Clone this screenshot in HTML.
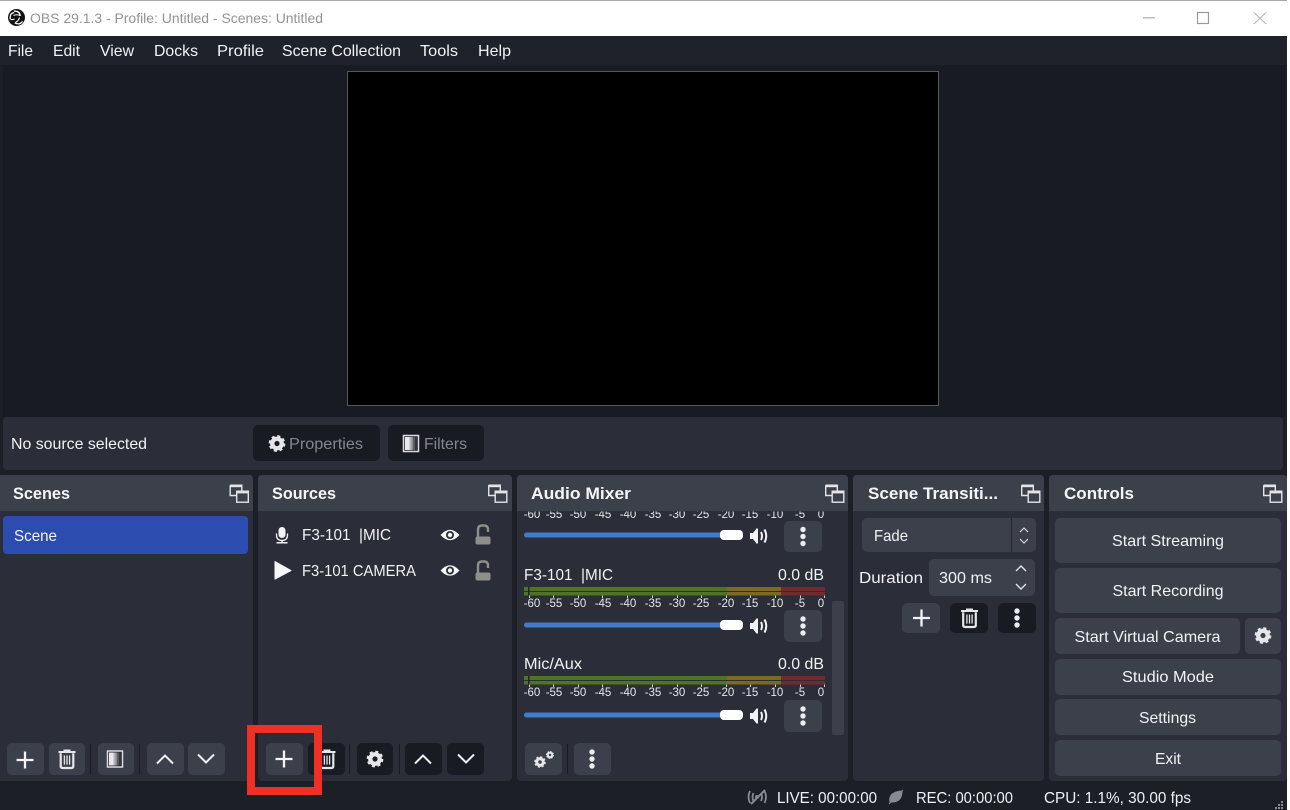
<!DOCTYPE html>
<html><head><meta charset="utf-8">
<style>
html,body{margin:0;padding:0;background:#1d1f26;width:1290px;height:810px;overflow:hidden}
svg{display:block}
text{font-family:"Liberation Sans",sans-serif;font-size:16px;fill:#f2f2f4;white-space:pre}
.b{font-weight:bold;font-size:16.5px;fill:#f5f5f7}
.s{font-size:11.5px;fill:#e6e6ea}
.m{text-anchor:middle}
</style></head><body>
<svg width="1290" height="810" viewBox="0 0 1290 810" xmlns="http://www.w3.org/2000/svg">
<defs>
<g id="float" fill="none" stroke="#e4e4e8" stroke-width="1.4">
<path d="M.7.7H12.3V6M.7.7V11H7"/><path d="M.7 1.6H12.3" stroke-width="2.2"/>
<rect x="7.2" y="6.7" width="11.6" height="11"/><path d="M7.2 7.8H18.8" stroke-width="2.2"/>
</g>
<g id="plus"><path d="M-8.5 0H8.5M0-8.5V8.5" stroke="#f4f4f6" stroke-width="2.3" fill="none"/></g>
<g id="trash" fill="none" stroke="#e6e6ea"><path d="M-8.5-7H8.5M-3.5-8.5H3.5" stroke-width="2"/><path d="M-6.3-5.8V7Q-6.3 9-4.3 9H4.3Q6.3 9 6.3 7V-5.8" stroke-width="2.2"/><path d="M-2.6-3.5V5.6M0-3.5V5.6M2.6-3.5V5.6" stroke-width="1.3"/></g>
<g id="dots" fill="#ecedf0"><circle cy="-7" r="2.7"/><circle r="2.7"/><circle cy="7" r="2.7"/></g>
<g id="gear"><circle r="5" fill="none" stroke="#e6e6ea" stroke-width="4.6"/><circle r="7.6" fill="none" stroke="#e6e6ea" stroke-width="2.4" stroke-dasharray="3.2 2.77"/></g>
<g id="up"><path d="M-8 4.5L0-3.5L8 4.5" fill="none" stroke="#eeeef1" stroke-width="2"/></g>
<g id="down"><path d="M-8-4.5L0 3.5L8-4.5" fill="none" stroke="#eeeef1" stroke-width="2"/></g>
<g id="filter"><rect x="-7.5" y="-8" width="15" height="16" fill="#20222a" stroke="#dcdce0" stroke-width="1.5"/><rect x="-6" y="-6.5" width="4.5" height="13" fill="#e8e8ec"/><rect x="-1.5" y="-6.5" width="2" height="13" fill="#b4b4b8"/><rect x=".5" y="-6.5" width="1.8" height="13" fill="#8a8a8e"/><rect x="2.3" y="-6.5" width="1.8" height="13" fill="#5c5c60"/><rect x="4.1" y="-6.5" width="1.9" height="13" fill="#35353a"/></g>
<g id="spk"><path d="M-9-3H-6L-2.500-7.500H-1V7.500H-2.500L-6 3H-9Z" fill="#f2f2f4"/><path d="M2-4Q4 0 2 4M5.500-6.500Q9 0 5.500 6.500" fill="none" stroke="#f2f2f4" stroke-width="2"/></g>
<g id="eye"><path d="M-9.500 0Q0-10.500 9.500 0Q0 10.500-9.500 0Z" fill="#f6f6f8"/><circle r="4" fill="#2b2e38"/><circle r="2.200" fill="#f6f6f8"/></g>
<g id="lock"><rect x="-7.500" y="1.500" width="15" height="8" rx="2" fill="#8e8e8a"/><path d="M-5 2V-5.500Q-5-9.500-1-9.500H1Q5-9.500 5-5.500V-3" fill="none" stroke="#8e8e8a" stroke-width="2.400"/></g>
<g id="ticks">
<text class="s" x="8" y="4" text-anchor="middle">-60</text><text class="s" x="30" y="4" text-anchor="middle">-55</text><text class="s" x="54" y="4" text-anchor="middle">-50</text><text class="s" x="79" y="4" text-anchor="middle">-45</text><text class="s" x="104" y="4" text-anchor="middle">-40</text><text class="s" x="129" y="4" text-anchor="middle">-35</text><text class="s" x="153" y="4" text-anchor="middle">-30</text><text class="s" x="177" y="4" text-anchor="middle">-25</text><text class="s" x="202" y="4" text-anchor="middle">-20</text><text class="s" x="226" y="4" text-anchor="middle">-15</text><text class="s" x="251" y="4" text-anchor="middle">-10</text><text class="s" x="276" y="4" text-anchor="middle">-5</text><text class="s" x="297" y="4" text-anchor="middle">0</text>
</g>
<g id="meter">
<rect x="0" y="0" width="203" height="4" fill="#4f7423"/><rect x="0" y="5" width="203" height="3.500" fill="#4f7423"/>
<rect x="203" y="0" width="54" height="4" fill="#7a6a22"/><rect x="203" y="5" width="54" height="3.500" fill="#7a6a22"/>
<rect x="257" y="0" width="44" height="4" fill="#702a30"/><rect x="257" y="5" width="44" height="3.500" fill="#702a30"/>
<rect x="4" y="0" width="1.500" height="8.500" fill="#22242c"/>
<path d="M5.500 8.500V11M29.500 8.500V11M54.500 8.500V11M78.500 8.500V11M103.500 8.500V11M128.500 8.500V11M153.500 8.500V11M177.500 8.500V11M202.500 8.500V11M226.500 8.500V11M251.500 8.500V11M276.500 8.500V11M300.500 8.500V11" stroke="#d0d0d4"/>
</g>
<g id="slider"><rect x="0" y="-2.500" width="200" height="5" rx="2.500" fill="#3f7cc9"/><rect x="196" y="-5" width="23" height="10" rx="4" fill="#fff"/></g>
</defs>

<!-- title bar -->
<rect width="1290" height="36" fill="#fff"/>
<rect width="1290" height="1" fill="#a9a9a9"/>
<circle cx="16.500" cy="17.500" r="8.500" fill="#111"/>
<path d="M13 11.500Q19 10.500 20 15.500M23 20.500Q20.500 25 15.500 23M10.500 20Q9 14 13.500 13" fill="none" stroke="#fff" stroke-width="1.300" transform="rotate(8 16.500 17.500)"/>
<path d="M13.500 15.500Q16.500 14 20 15.500M15.500 22.500Q18.500 21 19.500 17.500M10.500 19.500Q12 20 14.500 19" fill="none" stroke="#fff" stroke-width="1.100"/>
<text x="30" y="23" style="font-size:13.500px;fill:#939393" textLength="293" lengthAdjust="spacingAndGlyphs">OBS 29.1.3 - Profile: Untitled - Scenes: Untitled</text>
<rect x="1143" y="17" width="12" height="1.500" fill="#bdbdbd"/>
<rect x="1197.500" y="12.500" width="11" height="11" fill="none" stroke="#9a9a9a" stroke-width="1.200"/>
<path d="M1254 12.500L1266 24M1266 12.500L1254 24" stroke="#b5b5b5" stroke-width="1.100"/>

<!-- menu -->
<rect y="36" width="1290" height="29" fill="#1f222a"/>
<text x="8" y="56" textLength="25" lengthAdjust="spacingAndGlyphs">File</text>
<text x="53" y="56" textLength="27" lengthAdjust="spacingAndGlyphs">Edit</text>
<text x="100" y="56" textLength="34" lengthAdjust="spacingAndGlyphs">View</text>
<text x="154" y="56" textLength="44" lengthAdjust="spacingAndGlyphs">Docks</text>
<text x="217" y="56" textLength="47" lengthAdjust="spacingAndGlyphs">Profile</text>
<text x="282" y="56" textLength="119" lengthAdjust="spacingAndGlyphs">Scene Collection</text>
<text x="420" y="56" textLength="38" lengthAdjust="spacingAndGlyphs">Tools</text>
<text x="478" y="56" textLength="33" lengthAdjust="spacingAndGlyphs">Help</text>

<!-- preview -->
<rect x="3" y="65" width="1282" height="352" fill="#191b22"/>
<rect x="347.500" y="71.500" width="591" height="334" fill="#000" stroke="#55575f"/>

<!-- context bar -->
<rect x="3" y="417" width="1280" height="53" rx="4" fill="#2b2e38"/>
<text x="11" y="449" textLength="136" lengthAdjust="spacingAndGlyphs">No source selected</text>
<rect x="253" y="425" width="127" height="36" rx="5" fill="#191b22"/>
<use href="#gear" transform="translate(277,443.500) scale(.95)"/>
<text x="289" y="449" style="fill:#85868c" textLength="74" lengthAdjust="spacingAndGlyphs">Properties</text>
<rect x="388" y="425" width="96" height="36" rx="5" fill="#191b22"/>
<use href="#filter" transform="translate(411,443.500)"/>
<text x="424" y="449" style="fill:#85868c" textLength="43" lengthAdjust="spacingAndGlyphs">Filters</text>

<!-- docks -->
<rect x="-5" y="475" width="258" height="306" rx="4" fill="#2b2e38"/>
<path d="M0 475H249Q253 475 253 479V511H0Z" fill="#3c404b"/>
<rect x="258" y="475" width="254" height="306" rx="4" fill="#2b2e38"/>
<path d="M262 475H508Q512 475 512 479V511H258V479Q258 475 262 475Z" fill="#3c404b"/>
<rect x="517" y="475" width="331" height="306" rx="4" fill="#2b2e38"/>
<path d="M521 475H844Q848 475 848 479V511H517V479Q517 475 521 475Z" fill="#3c404b"/>
<rect x="853" y="475" width="191" height="306" rx="4" fill="#2b2e38"/>
<path d="M857 475H1040Q1044 475 1044 479V511H853V479Q853 475 857 475Z" fill="#3c404b"/>
<rect x="1049" y="475" width="238" height="306" rx="4" fill="#2b2e38"/>
<path d="M1053 475H1283Q1287 475 1287 479V511H1049V479Q1049 475 1053 475Z" fill="#3c404b"/>

<text class="b" x="13" y="499" textLength="57" lengthAdjust="spacingAndGlyphs">Scenes</text>
<text class="b" x="272" y="499" textLength="64" lengthAdjust="spacingAndGlyphs">Sources</text>
<text class="b" x="531" y="499" textLength="100" lengthAdjust="spacingAndGlyphs">Audio Mixer</text>
<text class="b" x="868" y="499" textLength="130" lengthAdjust="spacingAndGlyphs">Scene Transiti...</text>
<text class="b" x="1064" y="499" textLength="70" lengthAdjust="spacingAndGlyphs">Controls</text>
<use href="#float" x="229.500" y="484.500"/>
<use href="#float" x="488" y="484.500"/>
<use href="#float" x="825" y="484.500"/>
<use href="#float" x="1021" y="484.500"/>
<use href="#float" x="1263" y="484.500"/>

<!-- scenes -->
<rect x="3" y="516" width="245" height="38" rx="4" fill="#2d4cb0"/>
<text x="14" y="541" textLength="43" lengthAdjust="spacingAndGlyphs">Scene</text>

<!-- sources -->
<g fill="#f4f4f6"><rect x="278.500" y="527" width="7" height="11" rx="3.500"/><path d="M276.500 533.500V535Q276.500 540.500 282 540.500Q287.500 540.500 287.500 535V533.500" fill="none" stroke="#f4f4f6" stroke-width="1.300"/><rect x="281.300" y="540" width="1.500" height="2.500"/><rect x="276.500" y="542" width="11" height="1.500"/></g>
<path d="M275 561.500L291 570.500L275 579Z" fill="#f6f6f8" stroke="#f6f6f8" stroke-linejoin="round"/>
<text x="302" y="540" textLength="89" lengthAdjust="spacingAndGlyphs">F3-101  |MIC</text>
<text x="302" y="576" textLength="114" lengthAdjust="spacingAndGlyphs">F3-101 CAMERA</text>
<use href="#eye" x="450" y="535"/><use href="#eye" x="450" y="570.500"/>
<use href="#lock" x="483" y="535"/><use href="#lock" x="483" y="571"/>

<!-- audio mixer -->
<svg x="517" y="511.500" width="331" height="230" viewBox="517 511.500 331 230">
<use href="#ticks" x="524" y="514"/>
</svg>
<use href="#slider" x="524" y="535"/><use href="#spk" x="759" y="536"/>
<rect x="784" y="521" width="38" height="31" rx="5" fill="#3c404b"/><use href="#dots" x="803" y="536.500"/>

<text x="524" y="580" textLength="89" lengthAdjust="spacingAndGlyphs">F3-101  |MIC</text>
<text x="778" y="580" textLength="46" lengthAdjust="spacingAndGlyphs">0.0 dB</text>
<use href="#meter" x="524" y="587"/>
<use href="#ticks" x="524" y="603"/>
<use href="#slider" x="524" y="625"/><use href="#spk" x="759" y="626"/>
<rect x="784" y="610" width="38" height="32" rx="5" fill="#3c404b"/><use href="#dots" x="803" y="626"/>

<text x="524" y="669" textLength="58" lengthAdjust="spacingAndGlyphs">Mic/Aux</text>
<text x="778" y="669" textLength="46" lengthAdjust="spacingAndGlyphs">0.0 dB</text>
<use href="#meter" x="524" y="676"/>
<use href="#ticks" x="524" y="692"/>
<use href="#slider" x="524" y="715"/><use href="#spk" x="759" y="716"/>
<rect x="784" y="700" width="38" height="32" rx="5" fill="#3c404b"/><use href="#dots" x="803" y="716"/>
<rect x="832" y="601" width="12" height="134" rx="2" fill="#3c404b"/>

<!-- transitions -->
<rect x="862" y="518" width="174" height="34" rx="5" fill="#3c404b"/>
<rect x="1011" y="518" width="1" height="34" fill="#23252d"/>
<text x="874" y="541" textLength="34" lengthAdjust="spacingAndGlyphs">Fade</text>
<path d="M1020 532L1024 528L1028 532M1020 539L1024 543L1028 539" fill="none" stroke="#d8d8dc" stroke-width="1.200"/>
<text x="859" y="583" textLength="64" lengthAdjust="spacingAndGlyphs">Duration</text>
<rect x="929" y="559" width="106" height="37" rx="5" fill="#3c404b"/>
<text x="939" y="583" textLength="53" lengthAdjust="spacingAndGlyphs">300 ms</text>
<path d="M1016 571L1021 566L1026 571M1016 584L1021 589L1026 584" fill="none" stroke="#e4e4e8" stroke-width="1.400"/>
<rect x="902" y="603" width="38" height="30" rx="5" fill="#3c404b"/><use href="#plus" x="921.500" y="618"/>
<rect x="950" y="603" width="38" height="30" rx="5" fill="#191b22"/><use href="#trash" x="969.500" y="618"/>
<rect x="998" y="603" width="38" height="30" rx="5" fill="#191b22"/><use href="#dots" x="1017" y="618"/>

<!-- controls -->
<rect x="1055" y="518" width="226" height="45" rx="5" fill="#3c404b"/>
<rect x="1055" y="568" width="226" height="45" rx="5" fill="#3c404b"/>
<rect x="1055" y="618" width="185" height="36" rx="5" fill="#3c404b"/>
<rect x="1245" y="618" width="36" height="36" rx="5" fill="#3c404b"/>
<rect x="1055" y="659" width="226" height="36" rx="5" fill="#3c404b"/>
<rect x="1055" y="699" width="226" height="36" rx="5" fill="#3c404b"/>
<rect x="1055" y="740" width="226" height="36" rx="5" fill="#3c404b"/>
<text x="1112" y="546" textLength="112" lengthAdjust="spacingAndGlyphs">Start Streaming</text>
<text x="1112.500" y="596" textLength="111" lengthAdjust="spacingAndGlyphs">Start Recording</text>
<text x="1074.500" y="642" textLength="146" lengthAdjust="spacingAndGlyphs">Start Virtual Camera</text>
<use href="#gear" transform="translate(1263,635.500) scale(.95)"/>
<text x="1122" y="682" textLength="92" lengthAdjust="spacingAndGlyphs">Studio Mode</text>
<text x="1139" y="723" textLength="57" lengthAdjust="spacingAndGlyphs">Settings</text>
<text x="1155" y="764" textLength="26" lengthAdjust="spacingAndGlyphs">Exit</text>

<!-- bottom toolbars -->
<rect x="7" y="743" width="37" height="32" rx="5" fill="#3c404b"/><use href="#plus" x="25" y="760"/>
<rect x="49" y="743" width="36" height="32" rx="5" fill="#3c404b"/><use href="#trash" x="67" y="759"/>
<rect x="90" y="744" width="1" height="30" fill="#191b22"/>
<rect x="98" y="743" width="36" height="32" rx="5" fill="#3c404b"/><use href="#filter" x="115" y="759"/>
<rect x="139" y="744" width="1" height="30" fill="#191b22"/>
<rect x="147" y="743" width="37" height="32" rx="5" fill="#3c404b"/><use href="#up" x="165" y="759"/>
<rect x="188" y="743" width="37" height="32" rx="5" fill="#3c404b"/><use href="#down" x="206" y="759"/>

<rect x="308" y="743" width="37" height="32" rx="5" fill="#191b22"/><use href="#trash" x="327" y="759"/>
<rect x="349" y="744" width="1" height="30" fill="#191b22"/>
<rect x="357" y="743" width="36" height="32" rx="5" fill="#191b22"/><use href="#gear" transform="translate(375,759) scale(.95)"/>
<rect x="399" y="744" width="1" height="30" fill="#191b22"/>
<rect x="405" y="743" width="37" height="32" rx="5" fill="#191b22"/><use href="#up" x="423" y="759"/>
<rect x="447" y="743" width="37" height="32" rx="5" fill="#191b22"/><use href="#down" x="466" y="759"/>
<rect x="266" y="743" width="37" height="32" rx="5" fill="#3c404b"/><use href="#plus" x="284" y="759"/>

<rect x="525" y="743" width="37" height="32" rx="5" fill="#3c404b"/>
<use href="#gear" transform="translate(540,762) scale(.66)"/><use href="#gear" transform="translate(550,755) scale(.46)"/>
<rect x="567" y="744" width="1" height="30" fill="#191b22"/>
<rect x="574" y="743" width="37" height="32" rx="5" fill="#3c404b"/><use href="#dots" x="592" y="759"/>

<!-- red highlight -->
<rect x="251" y="729" width="67" height="62" fill="none" stroke="#ee3124" stroke-width="8"/>

<!-- status bar -->
<g fill="none" stroke="#8a8a8e" stroke-width="1.800"><path d="M750 791Q747 797 750 803M753.500 793Q751.500 797 753.500 801M764.500 791Q767.500 797 764.500 803M761 793Q763 797 761 801"/><path d="M751 804L765 790" stroke-width="2"/></g>
<circle cx="757" cy="797" r="2" fill="#8a8a8e"/>
<text x="777" y="803" textLength="100" lengthAdjust="spacingAndGlyphs">LIVE: 00:00:00</text>
<path d="M890 802Q888 792 902 791Q902 802 892 802ZM889 804L903 790" fill="#8a8a8e" stroke="#8a8a8e" stroke-width="1"/>
<text x="916" y="803" textLength="97" lengthAdjust="spacingAndGlyphs">REC: 00:00:00</text>
<text x="1044" y="803" textLength="147" lengthAdjust="spacingAndGlyphs">CPU: 1.1%, 30.00 fps</text>
<g fill="#8a8a8e"><rect x="1281" y="801" width="2" height="2"/><rect x="1278" y="804" width="2" height="2"/><rect x="1281" y="804" width="2" height="2"/><rect x="1275" y="807" width="2" height="2"/><rect x="1278" y="807" width="2" height="2"/><rect x="1281" y="807" width="2" height="2"/></g>
<rect x="1287" y="0" width="3" height="810" fill="#fff"/>
</svg>
</body></html>
